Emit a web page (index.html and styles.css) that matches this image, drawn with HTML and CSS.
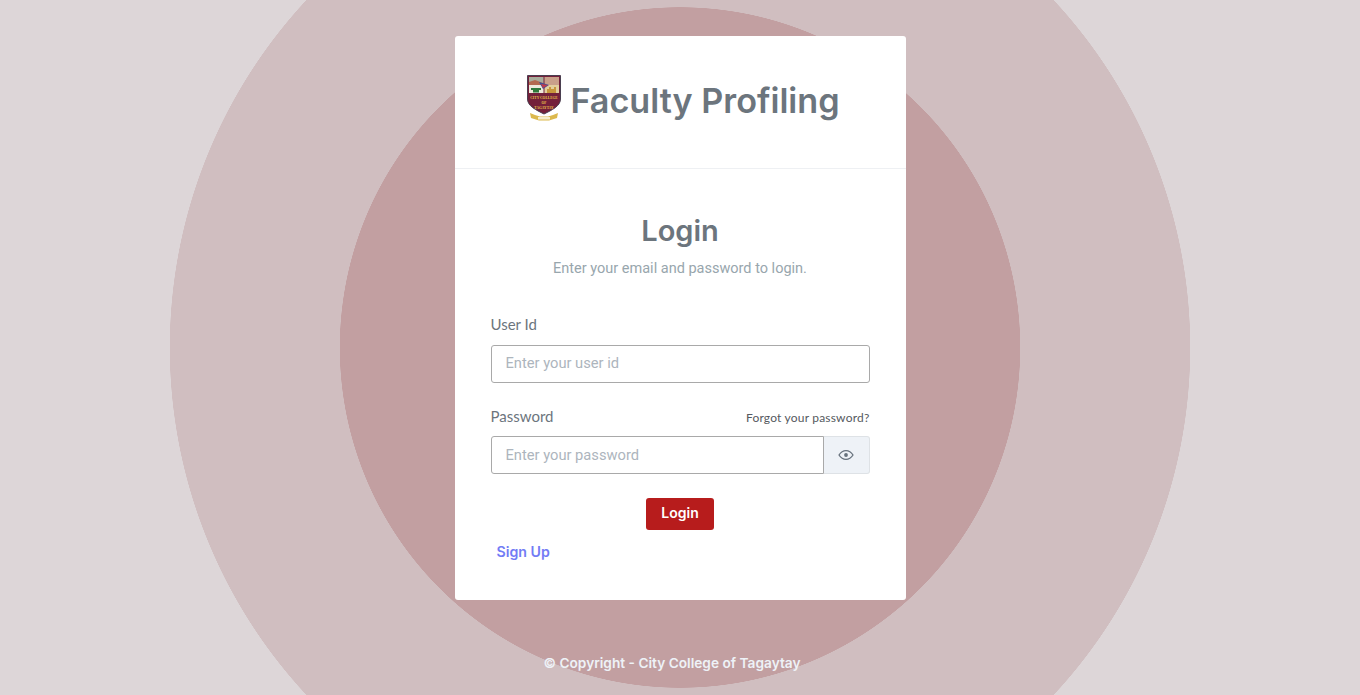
FILE: index.html
```html
<!DOCTYPE html>
<html lang="en">
<head>
<meta charset="utf-8">
<title>Faculty Profiling</title>
<link rel="stylesheet" href="styles.css">
</head>
<body>
<main class="page">
  <section class="card">
    <header class="card-head">
      <svg class="crest" width="34" height="46" viewBox="0 0 34 46">
        <path d="M0.5 0.5H33.5V24C33.5 31 25 35 17 39C9 35 0.5 31 0.5 24Z" fill="#74203a" stroke="#4a3f50"/>
        <rect x="2" y="2" width="14.5" height="8" fill="#a9ad9c"/>
        <rect x="17.5" y="2" width="14.5" height="8" fill="#c9a08a"/>
        <path d="M2 7L8 5L16 8V10H2Z" fill="#b3694f"/>
        <rect x="2" y="10" width="14.5" height="8" fill="#eee9dc"/>
        <rect x="17.5" y="10" width="14.5" height="8" fill="#e2cf9d"/>
        <path d="M4 13H14V15H12V17.5H6V15H4Z" fill="#2f7a3c"/>
        <path d="M12 7L22 10L16 14Z" fill="#3c4f9a"/>
        <path d="M14 9L21 10L16 13Z" fill="#c23b4a"/>
        <path d="M20 18V14H22V12H24V14H27V12H29V18Z" fill="#c8963c"/>
        <text class="crest-text" x="17" y="24">CITY COLLEGE</text>
        <text class="crest-text" x="17" y="29">OF</text>
        <text class="crest-text" x="17" y="33.5">TAGAYTAY</text>
        <path d="M3 38L8 40L13 41.5H21L26 40L31 38L30 43L22 45.5H12L4 43Z" fill="#dcb94e"/>
        <rect x="11" y="42" width="12" height="2.5" fill="#f6efcf"/>
      </svg>
      <h1 class="brand">Faculty Profiling</h1>
    </header>
    <div class="card-body">
      <h2 class="title">Login</h2>
      <p class="subtitle">Enter your email and password to login.</p>
      <form class="form">
        <div class="field">
          <label class="label" for="uid">User Id</label>
          <input class="input input-solo" id="uid" type="text" placeholder="Enter your user id">
        </div>
        <div class="field">
          <div class="label-row">
            <label class="label label-tight" for="pwd">Password</label>
            <a class="forgot" href="#">Forgot your password?</a>
          </div>
          <div class="input-group">
            <input class="input input-joined" id="pwd" type="password" placeholder="Enter your password">
            <span class="eye-box">
              <svg width="16" height="16" viewBox="0 0 16 16" fill="none" stroke="#66717c" stroke-width="1.3">
                <path d="M1 8C3 4.8 5.3 3.6 8 3.6S13 4.8 15 8C13 11.2 10.7 12.4 8 12.4S3 11.2 1 8Z"/>
                <circle cx="8" cy="8" r="1.9" fill="#66717c" stroke="none"/>
              </svg>
            </span>
          </div>
        </div>
        <div class="actions"><button class="btn" type="button">Login</button></div>
        <a class="signup" href="#">Sign Up</a>
      </form>
    </div>
  </section>
  <footer class="copy">© Copyright - City College of Tagaytay</footer>
</main>
</body>
</html>
```
FILE: styles.css
```css
* { box-sizing: border-box; }
html, body { height: 100%; }
body {
  margin: 0;
  overflow: hidden;
  font-family: Inter, Lato, sans-serif;
  background: radial-gradient(circle at 50% 50%, #c29fa1 340px, #d0bec0 340.5px, #d0bec0 510px, #ddd6d8 510.5px);
}
.page {
  height: 100%;
  padding-top: 36px;
  display: flex;
  flex-direction: column;
  align-items: center;
}
.card {
  width: 451px;
  height: 564px;
  background: #fff;
  border-radius: 3px;
}
.card-head {
  height: 133px;
  padding: 39px 0 0 7px;
  border-bottom: 1px solid #eef0f3;
  display: flex;
  justify-content: center;
  align-items: flex-start;
  gap: 9px;
}
.crest { display: block; flex: none; }
.crest-text {
  font-family: "Liberation Serif", serif;
  font-size: 3.6px;
  font-weight: 700;
  fill: #e8c04a;
  text-anchor: middle;
}
.brand {
  margin: 1px 0 0;
  font-size: 34.2px;
  line-height: 50px;
  font-weight: 600;
  color: #6c757d;
  white-space: nowrap;
}
.card-body { padding: 44px 36px 0; }
.title {
  margin: 0;
  padding-top: 1px;
  text-align: center;
  font-size: 29px;
  line-height: 34px;
  font-weight: 600;
  color: #6c757d;
}
.subtitle {
  margin: 10px 0 0;
  text-align: center;
  font-family: Roboto, sans-serif;
  font-size: 14.5px;
  line-height: 21px;
  color: #98a6ad;
}
.form { margin-top: 35px; }
.field { margin-bottom: 24px; }
.label {
  display: block;
  font-family: Lato, sans-serif;
  font-size: 15px;
  line-height: 21px;
  color: #6c757d;
}
.label-row {
  display: flex;
  justify-content: space-between;
  align-items: center;
  margin-top: -1px;
}
.label-tight { margin-bottom: 2px; }
.forgot {
  font-family: Lato, sans-serif;
  font-size: 12px;
  letter-spacing: 0.2px;
  color: #55595e;
  text-decoration: none;
}
.input {
  height: 38px;
  padding: 0 14px;
  font-family: Roboto, sans-serif;
  font-size: 14.7px;
  background: #fff;
  border: 1px solid #a9a9a9;
  outline: none;
}
.input::placeholder { color: #adb5bd; opacity: 1; }
.input-solo { display: block; width: 100%; margin-top: 10px; padding-bottom: 2px; border-radius: 3px; }
.input-group { display: flex; margin-top: 7px; }
.input-joined { flex: 1; min-width: 0; border-radius: 3px 0 0 3px; }
.eye-box {
  width: 46px;
  height: 38px;
  display: flex;
  align-items: center;
  justify-content: center;
  background: #eef2f7;
  border: 1px solid #dee2e6;
  border-left: 0;
  border-radius: 0 3px 3px 0;
}
.actions { display: flex; justify-content: center; }
.btn {
  width: 68px;
  height: 32px;
  padding: 0 0 4px;
  font-family: inherit;
  font-size: 14px;
  font-weight: 600;
  color: #fff;
  background: #b71c1c;
  border: 0;
  border-radius: 3px;
}
.signup {
  display: block;
  margin: 11px 0 0 6px;
  font-size: 14.2px;
  line-height: 22px;
  font-weight: 600;
  color: #727cf5;
  text-decoration: none;
}
.copy {
  margin: 53px 16px 0 0;
  font-size: 13.7px;
  line-height: 20px;
  font-weight: 600;
  color: #eef2f7;
}
```
